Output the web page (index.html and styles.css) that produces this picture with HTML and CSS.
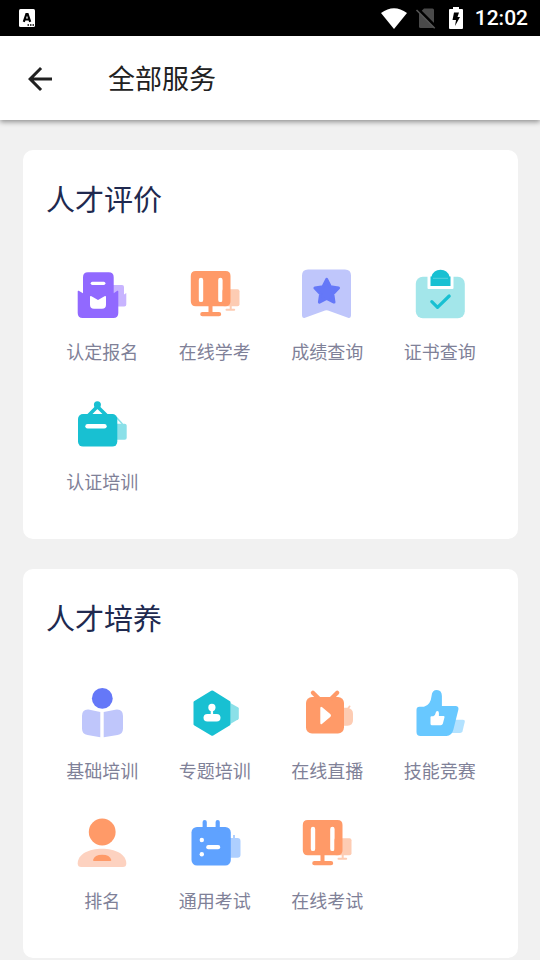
FILE: index.html
```html
<!DOCTYPE html>
<html lang="zh-CN">
<head>
<meta charset="utf-8">
<meta name="viewport" content="width=device-width, initial-scale=1">
<title>全部服务</title>
<link rel="stylesheet" href="styles.css">
</head>
<body>
<div class="status">
  <svg class="status-note" viewBox="0 0 16 18" aria-hidden="true">
    <rect width="16" height="18" rx="1.5" fill="#fff"/>
    <path d="M4.800 12.800 7.400 5h1.200l2.600 7.800M5.500 10.500h5" fill="none" stroke="#000" stroke-width="2.200"/>
    <path d="M8.500 15.200h1.500v1.500H8.500zM11 15.200h1.500v1.500H11zM13.500 15.200H15v1.500h-1.500z" fill="#000"/>
  </svg>
  <div class="status-right">
    <svg class="wifi" viewBox="0 0 26 21" aria-hidden="true"><path d="M0 5Q13-4.600 26 5L13 21Z" fill="#fff"/></svg>
    <svg class="sim" viewBox="0 0 20 21" aria-hidden="true">
      <path d="M8 .5h8.500q1.500 0 1.500 1.500v16.500q0 1.500-1.500 1.500h-12Q3 20 3 18.500V5.500Z" fill="#4a4a4a"/>
      <path d="M1.500.5 20 19" stroke="#000" stroke-width="3"/>
      <path d="M.5 2 18.700 20.200" stroke="#555" stroke-width="1.600"/>
    </svg>
    <svg class="battery" viewBox="0 0 14 22" aria-hidden="true">
      <path d="M4 0h6v2h3q1 0 1 1v18q0 1-1 1H1q-1 0-1-1V3q0-1 1-1h3Z" fill="#fff"/>
      <path d="M5 5.500h5L8.500 10H11L6 19l1-6H3.500Z" fill="#000"/>
    </svg>
    <span class="clock">12:02</span>
  </div>
</div>
<header class="appbar">
  <button class="back" type="button" aria-label="返回">
    <svg viewBox="0 0 24 24" aria-hidden="true"><path d="M20 11H7.830l5.590-5.590L12 4l-8 8 8 8 1.410-1.410L7.830 13H20v-2z" fill="#212121"/></svg>
  </button>
  <h1>全部服务</h1>
</header>
<main>
  <section class="card">
    <h2>人才评价</h2>
    <nav class="grid" aria-label="人才评价">
      <a class="tile" href="#"><svg viewBox="0 0 50 50" aria-hidden="true">
        <path d="M34 16h11q2 0 2 2v7.500l2.300-1.500v11.500q0 2-2 2H34Z" fill="#c8b4ff"/>
        <path d="M6 24.300V8.300q0-5 5-5h20.700q5 0 5 5v16l3.600-2.500q1-.5 1 .7V44q0 5-5 5H5.700q-5 0-5-5V22.500q0-1.200 1-.7Z" fill="#9169ff"/>
        <rect x="13.700" y="12.700" width="14.700" height="3.200" rx="1.600" fill="#fff"/>
        <path d="M13 28q0-1.500 1.500-.8L21 31l6.500-3.800q1.500-.7 1.500.8v7.700q0 4-4 4h-8q-4 0-4-4Z" fill="#fff"/>
      </svg><span>认定报名</span></a>
      <a class="tile" href="#"><svg viewBox="0 0 50 50" aria-hidden="true">
        <g id="monitor">
          <g fill="#fdccb3">
            <rect x="32" y="20.300" width="17.500" height="17" rx="2"/>
            <rect x="39.700" y="37" width="2" height="3"/>
            <rect x="35.500" y="39.700" width="9.700" height="2" rx="1"/>
          </g>
          <path fill="#ff9a68" fill-rule="evenodd" d="M5.800 2h29.700q5 0 5 5v25.300q0 5-5 5H22.500V43H29q2.200 0 2.200 2.150T29 47.300H12.400q-2.200 0-2.200-2.150T12.400 43h6.100V37.300H5.800q-5 0-5-5V7q0-5 5-5ZM8.800 10.900v20q0 2.200 2.200 2.200t2.200-2.200v-20q0-2.200-2.200-2.200t-2.200 2.200ZM28.200 10.900v20q0 2.200 2.200 2.200t2.200-2.200v-20q0-2.200-2.200-2.200t-2.200 2.200Z"/>
        </g>
      </svg><span>在线学考</span></a>
      <a class="tile" href="#"><svg viewBox="0 0 50 50" aria-hidden="true">
        <path d="M6 .5h37q6 0 6 6v40q0 3.200-3 2.300L26 41.500q-1.500-.5-3 0L3 48.800q-3 .9-3-2.300v-40q0-6 6-6Z" fill="#bfc6fb"/>
        <path d="m24.700 10.400 3.700 7.300 8.100 1.300-5.700 5.900 1.200 8.200-7.300-3.700-7.300 3.700 1.200-8.200-5.700-5.900 8.100-1.300Z" fill="#6578f8" stroke="#6578f8" stroke-width="3" stroke-linejoin="round"/>
      </svg><span>成绩查询</span></a>
      <a class="tile" href="#"><svg viewBox="0 0 50 50" aria-hidden="true">
        <rect x=".8" y="7.700" width="49" height="41.600" rx="7" fill="#a3e6ea"/>
        <path d="M12.500 7h26v12q0 1-1 1h-24q-1 0-1-1Z" fill="#fff"/>
        <path d="M15.500 7.500h1Q18.500.7 25.500.7t9 6.800h1V17h-20Z" fill="#18c0d2"/>
        <path d="M18 9.300h15" stroke="#72d9e3" stroke-width=".7"/>
        <path d="m16.800 32.700 5.700 5.600L34.200 27" fill="none" stroke="#18c0d2" stroke-width="3.200" stroke-linecap="round" stroke-linejoin="round"/>
      </svg><span>证书查询</span></a>
      <a class="tile" href="#"><svg viewBox="0 0 50 50" aria-hidden="true">
        <path d="M38 24.700h9.700q2 0 2 2v12q0 2-2 2H38Z" fill="#8be0e8"/>
        <path d="m39.500 18.500 6 6.500" stroke="#8be0e8" stroke-width="1.500"/>
        <rect x="1" y="15" width="39.300" height="32.600" rx="5" fill="#18c0d2"/>
        <path d="m11 17 9.400-9.500L30 17" fill="none" stroke="#18c0d2" stroke-width="3.600"/>
        <circle cx="20.400" cy="5.700" r="3.500" fill="#18c0d2"/>
        <rect x="8.300" y="25" width="21.400" height="4.600" rx="2.300" fill="#fff"/>
      </svg><span>认证培训</span></a>
    </nav>
  </section>
  <section class="card">
    <h2>人才培养</h2>
    <nav class="grid" aria-label="人才培养">
      <a class="tile" href="#"><svg viewBox="0 0 50 50" aria-hidden="true">
        <circle cx="25.300" cy="10.400" r="10.400" fill="#6578f8"/>
        <path d="M11.500 21.500 23.300 24v25.300L10.500 47Q5 46 5 40.500V28q0-7 6.500-6.500ZM39.500 21.500 26.700 24v25.300l13.800-2.300q5.500-1 5.500-6.500V28q0-7-6.500-6.500Z" fill="#bfc6fb"/>
      </svg><span>基础培训</span></a>
      <a class="tile" href="#"><svg viewBox="0 0 50 50" aria-hidden="true">
        <path d="m40.300 15 8 4.600q.5.300.5 1v9.700q0 .7-.5 1L40.300 36Z" fill="#8be0e8"/>
        <path d="m23.200 2.800 16.800 10.400q.5.300.5 1v22q0 .7-.5 1L23.200 47.500q-1 .6-2 0L4 37.200q-.5-.3-.5-1v-22q0-.7.5-1L21.200 2.800q1-.6 2 0Z" fill="#18c0d2"/>
        <circle cx="21.900" cy="19.400" r="3.600" fill="#fff"/>
        <path d="M20.700 21h2.400v6h-2.400Z" fill="#fff"/>
        <rect x="13.500" y="26" width="17" height="7.600" rx="3.800" fill="#fff"/>
      </svg><span>专题培训</span></a>
      <a class="tile" href="#"><svg viewBox="0 0 50 50" aria-hidden="true">
        <path d="M40 19.700h5.500Q51 20.500 51 26v6q0 5.700-5.500 5.700H40Z" fill="#fdccb3"/>
        <path d="m46 20.500 1.700-2.200" stroke="#fdccb3" stroke-width="1.700" stroke-linecap="round"/>
        <rect x="4" y="9" width="38" height="36.600" rx="6" fill="#ff9a68"/>
        <path d="m10.900 4.700 6 6M35.200 4.700l-6 6" stroke="#ff9a68" stroke-width="4.200" stroke-linecap="round"/>
        <path d="M18.300 20.200q0-2.400 1.900-1l8.300 7q1 1.300 0 2.600l-8.300 7q-1.900 1.400-1.900-1Z" fill="#fff"/>
      </svg><span>在线直播</span></a>
      <a class="tile" href="#"><svg viewBox="0 0 50 50" aria-hidden="true">
        <path d="M40 31.700h8q2.200 0 1.800 2l-2.300 9.500q-.5 1.800-2.500 1.800h-9Z" fill="#b3e2ff"/>
        <path d="M1.500 21.700q0-3 3-3H9q6.700-1.700 7.600-11Q17 2 21.900 2t5 6v10h13.600q3.500 0 2.900 3.500l-5 20Q36.800 48 31.500 48h-26q-4 0-4-4Z" fill="#68c8ff"/>
        <path d="M15.500 29.300q0-1 1-1h1.700q2.200-.6 2.500-3.500.2-1.800 1.700-1.800t1.500 2v3h4.600q1.200 0 1 1.200l-1.600 6.300q-.5 1.800-2.200 1.800h-8.700q-1.500 0-1.500-1.500Z" fill="#fff"/>
      </svg><span>技能竞赛</span></a>
      <a class="tile" href="#"><svg viewBox="0 0 50 50" aria-hidden="true">
        <circle cx="25.200" cy="14" r="13.400" fill="#ff9a68"/>
        <path d="M.7 45.500C.7 36 12 30.700 25 30.700S49.300 36 49.300 45.500q0 3.500-3.500 3.500H4.200Q.7 49 .7 45.500Z" fill="#fdd2c0"/>
        <path d="M16 42q1.500-5.300 9.200-5.300T34.300 42q0 1-1 1H17q-1 0-1-1Z" fill="#ff9a68"/>
      </svg><span>排名</span></a>
      <a class="tile" href="#"><svg viewBox="0 0 50 50" aria-hidden="true">
        <path d="M38 20h5v-3h2v3h2.500q3 0 3 3v13.700q0 3-3 3H38Z" fill="#aecfff"/>
        <rect x="1.500" y="9" width="39.300" height="38.600" rx="5.500" fill="#5fa2ff"/>
        <path d="M14.700 4v8M27.700 4v8" stroke="#5fa2ff" stroke-width="4.200" stroke-linecap="round"/>
        <circle cx="11.800" cy="22" r="2.200" fill="#fff"/><circle cx="11.800" cy="36.300" r="2.200" fill="#fff"/>
        <rect x="16.200" y="27" width="14" height="4.300" rx="2.100" fill="#fff"/>
      </svg><span>通用考试</span></a>
      <a class="tile" href="#"><svg viewBox="0 0 50 50" aria-hidden="true"><use href="#monitor"/></svg><span>在线考试</span></a>
    </nav>
  </section>
</main>
</body>
</html>
```
FILE: styles.css
```css
* {
  box-sizing: border-box;
}

body {
  margin: 0;
  min-height: 100vh;
  background: #f1f1f1;
  font-family: Roboto, "Noto Sans CJK SC", sans-serif;
}

h1,
h2 {
  margin: 0;
  font-weight: 400;
}

svg {
  display: block;
  overflow: visible;
}

.status {
  display: flex;
  align-items: center;
  justify-content: space-between;
  height: 36px;
  padding: 0 12px 0 19px;
  background: #000;
  color: #fff;
}

.status-note {
  width: 16px;
  height: 18px;
}

.status-right {
  display: flex;
  align-items: center;
}

.wifi {
  width: 26px;
  height: 21px;
  margin-right: 9px;
}

.sim {
  width: 20px;
  height: 21px;
  margin-right: 13px;
}

.battery {
  width: 14px;
  height: 22px;
  margin-right: 12px;
}

.clock {
  font-size: 21px;
  font-weight: 500;
  line-height: 36px;
}

.appbar {
  position: relative;
  display: flex;
  align-items: center;
  gap: 50px;
  height: 84px;
  padding: 2px 22px 0;
  background: #fff;
  box-shadow: 0 2px 5px rgba(0, 0, 0, 0.4);
}

.back {
  width: 36px;
  height: 36px;
  padding: 0;
  border: 0;
  background: none;
}

.appbar h1 {
  padding-top: 2px;
  color: #212121;
  font-size: 27px;
  line-height: 40px;
}

main {
  display: grid;
  gap: 30px;
  padding: 30px 22px 2px 23px;
}

.card {
  padding: 30px 22px 35px 23px;
  border-radius: 10px;
  background: #fff;
}

.card h2 {
  color: #20294f;
  font-size: 29px;
  line-height: 42px;
}

.grid {
  display: grid;
  grid-template-columns: repeat(4, 1fr);
  margin-top: 22px;
}

.tile {
  display: flex;
  flex-direction: column;
  align-items: center;
  gap: 21px;
  padding: 25px 0 8px;
  color: #7f8198;
  font-size: 18px;
  line-height: 26px;
  text-decoration: none;
}

.tile svg {
  width: 50px;
  height: 50px;
}
```
